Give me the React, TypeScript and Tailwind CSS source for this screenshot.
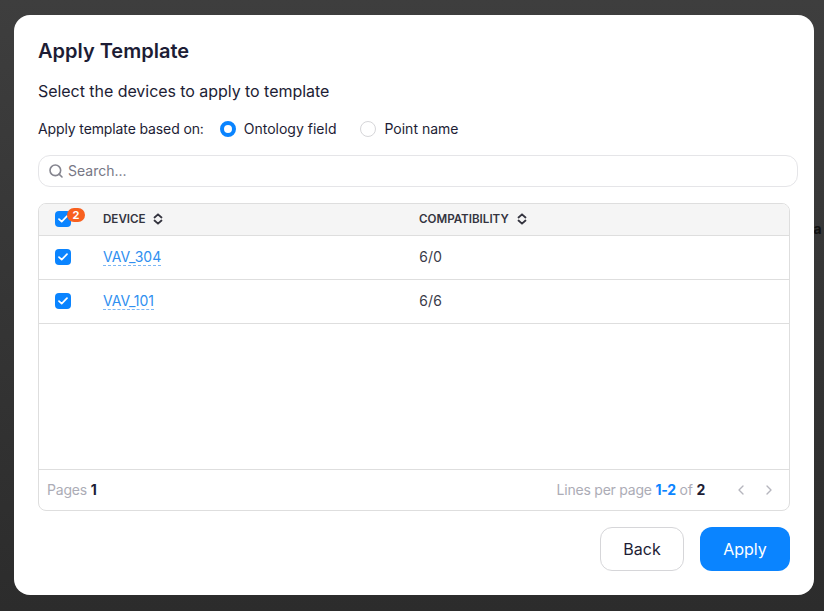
import { ChevronLeft, ChevronRight, Search } from 'lucide-react';

const rows = [
  { name: 'VAV_304', compatibility: '6/0' },
  { name: 'VAV_101', compatibility: '6/6' },
];

function Checkbox() {
  return (
    <span className="flex h-4 w-4 items-center justify-center rounded-[4px] bg-[#0a84ff]">
      <svg width="10" height="8" viewBox="0 0 10 8" fill="none">
        <path d="M1 4.2L3.7 6.7L9 1.2" stroke="white" strokeWidth="1.7" strokeLinecap="round" strokeLinejoin="round" />
      </svg>
    </span>
  );
}

function SortIcon() {
  return (
    <svg width="10" height="12" viewBox="0 0 10 12" fill="none" stroke="#34343f" strokeWidth="1.8" strokeLinecap="round" strokeLinejoin="round">
      <path d="M1.5 4.5L5 1.3L8.5 4.5" />
      <path d="M1.5 7.5L5 10.7L8.5 7.5" />
    </svg>
  );
}

export default function App() {
  return (
    <div className="relative h-[611px] w-[824px] overflow-hidden bg-gradient-to-b from-[#3e3e3e] to-[#2c2c2c] pl-[14px] pt-[15px] font-['Inter',sans-serif]">
      <span className="absolute left-[808px] top-[219px] text-sm font-bold text-[#111]">ra</span>

      <div className="relative flex h-[580px] w-[800px] flex-col rounded-2xl bg-white pl-6 pr-4 text-[#1d1d35]">
        <h1 className="mt-[22px] text-xl leading-7 font-semibold">Apply Template</h1>
        <p className="mt-[14px] text-base leading-6 tracking-[-0.05px]">Select the devices to apply to template</p>

        <div className="mt-[16px] flex h-5 items-center text-sm">
          <span className="tracking-[-0.12px]">Apply template based on:</span>
          <span className="ml-[16px] h-4 w-4 rounded-full border-[4px] border-[#0a84ff] bg-white" />
          <span className="ml-2">Ontology field</span>
          <span className="ml-6 h-4 w-4 rounded-full border border-[#d6d6d9] bg-white" />
          <span className="ml-2">Point name</span>
        </div>

        <div className="mt-4 flex h-8 items-center gap-1 rounded-xl border border-[#e5e5e8] pl-[9px] text-sm text-[#777785]">
          <Search size={16} strokeWidth={2.4} className="text-[#85858f]" />
          <span>Search...</span>
        </div>

        <div className="mt-4 mr-2 flex h-[308px] flex-col overflow-hidden rounded-lg border border-[#dedede]">
          <div className="flex h-8 shrink-0 items-center border-b border-[#dedede] bg-[#f5f5f5] text-[11.6px] font-semibold text-[#34343f]">
            <div className="relative -mt-px w-16 pl-4">
              <Checkbox />
              <span className="absolute left-[28px] top-[-3px] flex h-[14px] w-[18px] items-center justify-center rounded-full bg-[#f8601f] text-[11px] leading-none font-bold text-white">
                2
              </span>
            </div>
            <div className="flex w-[316px] items-center gap-[7px]">
              DEVICE <SortIcon />
            </div>
            <div className="flex items-center gap-2">
              COMPATIBILITY <SortIcon />
            </div>
          </div>

          {rows.map((row) => (
            <div key={row.name} className="flex h-11 shrink-0 items-center border-b border-[#dedede] pb-px text-sm">
              <div className="w-16 pl-4">
                <Checkbox />
              </div>
              <div className="w-[316px]">
                <span className="border-b border-dashed border-[#7db8f5] leading-4 text-[#2f8ff0]">{row.name}</span>
              </div>
              <div className="text-[#3a3a48] tabular-nums">{row.compatibility}</div>
            </div>
          ))}

          <div className="flex-1" />

          <div className="flex h-[41px] shrink-0 items-center justify-between border-t border-[#dedede] pl-2 pr-3 text-sm text-[#acacb6]">
            <div className="tracking-[-0.2px]">
              Pages <span className="font-bold text-[#1d1d35]">1</span>
            </div>
            <div className="flex items-center">
              <span className="tracking-[-0.23px]">
                Lines per page <span className="font-bold text-[#0a84ff]">1-2</span> of{' '}
                <span className="font-bold text-[#1d1d35]">2</span>
              </span>
              <ChevronLeft size={16} strokeWidth={2} className="ml-[28px] text-[#b5b5bd]" />
              <ChevronRight size={16} strokeWidth={2} className="ml-3 text-[#b5b5bd]" />
            </div>
          </div>
        </div>

        <div className="mt-4 mr-2 flex justify-end gap-4 text-base">
          <button className="h-11 w-[84px] rounded-xl border border-[#d6d6d9] bg-white">Back</button>
          <button className="h-11 w-[90px] rounded-xl bg-[#0a84ff] text-white">Apply</button>
        </div>
      </div>
    </div>
  );
}
